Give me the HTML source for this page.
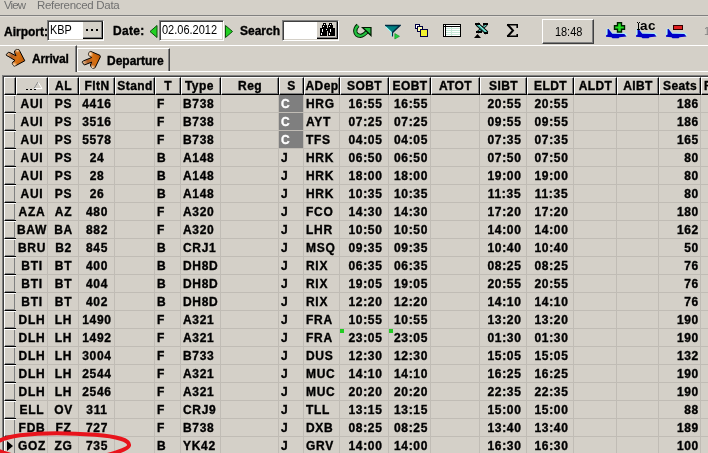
<!DOCTYPE html><html><head><meta charset="utf-8"><style>
*{margin:0;padding:0;box-sizing:border-box}
html,body{width:708px;height:453px;overflow:hidden;background:#d4d0c8}
body{position:relative;font-family:"Liberation Sans",sans-serif;font-size:12px;color:#000}
.ab{position:absolute}
.b{font-weight:bold}
.hc{position:absolute;top:77px;height:18px;background:#d4d0c8;border-top:1px solid #fff;border-left:1px solid #fff;border-right:1px solid #000;border-bottom:1px solid #000;box-shadow:inset -1px -1px #808080;font-weight:bold;line-height:16px;letter-spacing:0.4px;white-space:nowrap;overflow:hidden;text-align:center}
.ic{position:absolute;left:4px;width:12px;height:18px;border-top:1px solid #fff;border-left:1px solid #fff;border-bottom:1px solid #000;box-shadow:inset -1px 0 #d4d0c8, inset -2px -1px #808080}
.dc{position:absolute;height:18px;border-right:1px solid #c0bcb5;border-bottom:1px solid #c0bcb5;font-weight:bold;line-height:19px;letter-spacing:0.7px;white-space:nowrap;overflow:hidden}
.dc,.hc,.lbl{-webkit-text-stroke:0.35px #000}
.l{text-align:left;padding-left:2px}.c{text-align:center;padding-left:1px}.r{text-align:right;padding-right:1px}
.menu{position:absolute;top:-1px;font-size:11.5px;letter-spacing:-0.3px;color:#707070;line-height:13px}
.lbl{position:absolute;font-weight:bold;font-size:12px;line-height:14px}
.sunk{position:absolute;background:#fff;border-top:1px solid #808080;border-left:1px solid #808080;border-bottom:1px solid #fff;border-right:1px solid #fff;box-shadow:inset 1px 1px #404040, inset -1px -1px #d4d0c8}
</style></head><body><div style="position:absolute;left:0;top:0;width:708px;height:453px;overflow:hidden;will-change:transform">
<div class="menu" style="left:4px;letter-spacing:-0.9px">View</div>
<div class="menu" style="left:37px">Referenced Data</div>
<div class="ab" style="left:0;top:15px;width:708px;height:1px;background:#808080"></div>
<div class="ab" style="left:0;top:16px;width:708px;height:1px;background:#e0dcd6"></div>
<div class="lbl" style="left:4px;top:25px">Airport:</div>
<div class="sunk" style="left:47px;top:20px;width:57px;height:21px"></div>
<div class="ab" style="left:50px;top:23px;font-size:12.5px;line-height:14px;transform:scaleX(0.87);transform-origin:0 0">KBP</div>
<div class="ab" style="left:83px;top:22px;width:20px;height:17px;background:#d4d0c8;border-right:1px solid #000;border-bottom:1px solid #000;box-shadow:inset -1px -1px #808080"></div>
<svg class="ab" style="left:86px;top:29px" width="13" height="3"><rect x="0" y="0" width="2" height="2"/><rect x="5" y="0" width="2" height="2"/><rect x="10" y="0" width="2" height="2"/></svg>
<div class="lbl" style="left:113px;top:24px;letter-spacing:0.3px">Date:</div>
<svg class="ab" style="left:149px;top:25px" width="9" height="13"><path d="M8 0.5 L1 6.5 L8 12.5Z" fill="#22d022" stroke="#0c500c" stroke-width="1"/></svg>
<div class="sunk" style="left:159px;top:20px;width:65px;height:21px"></div>
<div class="ab" style="left:162px;top:23px;font-size:12.5px;line-height:14px;transform:scaleX(0.88);transform-origin:0 0">02.06.2012</div>
<svg class="ab" style="left:225px;top:25px" width="9" height="13"><path d="M0.5 0.5 L7.5 6.5 L0.5 12.5Z" fill="#22d022" stroke="#0c500c" stroke-width="1"/></svg>
<div class="lbl" style="left:240px;top:24px">Search</div>
<div class="sunk" style="left:282px;top:20px;width:57px;height:21px"></div>
<div class="ab" style="left:317px;top:22px;width:21px;height:17px;background:#d4d0c8;border-right:1px solid #000;border-bottom:1px solid #000;box-shadow:inset -1px -1px #808080"></div>
<svg class="ab" style="left:320px;top:23px" width="15" height="13" shape-rendering="crispEdges"><rect x="3" y="0" width="1" height="1" fill="#000"/><rect x="4" y="0" width="1" height="1" fill="#000"/><rect x="5" y="0" width="1" height="1" fill="#000"/><rect x="9" y="0" width="1" height="1" fill="#000"/><rect x="10" y="0" width="1" height="1" fill="#000"/><rect x="11" y="0" width="1" height="1" fill="#000"/><rect x="3" y="1" width="1" height="1" fill="#000"/><rect x="4" y="1" width="1" height="1" fill="#fff"/><rect x="5" y="1" width="1" height="1" fill="#000"/><rect x="9" y="1" width="1" height="1" fill="#000"/><rect x="10" y="1" width="1" height="1" fill="#fff"/><rect x="11" y="1" width="1" height="1" fill="#000"/><rect x="2" y="2" width="1" height="1" fill="#000"/><rect x="3" y="2" width="1" height="1" fill="#000"/><rect x="4" y="2" width="1" height="1" fill="#000"/><rect x="5" y="2" width="1" height="1" fill="#000"/><rect x="6" y="2" width="1" height="1" fill="#000"/><rect x="8" y="2" width="1" height="1" fill="#000"/><rect x="9" y="2" width="1" height="1" fill="#000"/><rect x="10" y="2" width="1" height="1" fill="#000"/><rect x="11" y="2" width="1" height="1" fill="#000"/><rect x="12" y="2" width="1" height="1" fill="#000"/><rect x="2" y="3" width="1" height="1" fill="#000"/><rect x="3" y="3" width="1" height="1" fill="#fff"/><rect x="4" y="3" width="1" height="1" fill="#000"/><rect x="5" y="3" width="1" height="1" fill="#000"/><rect x="6" y="3" width="1" height="1" fill="#000"/><rect x="8" y="3" width="1" height="1" fill="#000"/><rect x="9" y="3" width="1" height="1" fill="#fff"/><rect x="10" y="3" width="1" height="1" fill="#000"/><rect x="11" y="3" width="1" height="1" fill="#000"/><rect x="12" y="3" width="1" height="1" fill="#000"/><rect x="2" y="4" width="1" height="1" fill="#000"/><rect x="3" y="4" width="1" height="1" fill="#000"/><rect x="4" y="4" width="1" height="1" fill="#000"/><rect x="5" y="4" width="1" height="1" fill="#000"/><rect x="6" y="4" width="1" height="1" fill="#000"/><rect x="8" y="4" width="1" height="1" fill="#000"/><rect x="9" y="4" width="1" height="1" fill="#000"/><rect x="10" y="4" width="1" height="1" fill="#000"/><rect x="11" y="4" width="1" height="1" fill="#000"/><rect x="12" y="4" width="1" height="1" fill="#000"/><rect x="0" y="5" width="1" height="1" fill="#000"/><rect x="1" y="5" width="1" height="1" fill="#000"/><rect x="2" y="5" width="1" height="1" fill="#000"/><rect x="3" y="5" width="1" height="1" fill="#000"/><rect x="4" y="5" width="1" height="1" fill="#000"/><rect x="5" y="5" width="1" height="1" fill="#000"/><rect x="6" y="5" width="1" height="1" fill="#000"/><rect x="7" y="5" width="1" height="1" fill="#000"/><rect x="8" y="5" width="1" height="1" fill="#000"/><rect x="9" y="5" width="1" height="1" fill="#000"/><rect x="10" y="5" width="1" height="1" fill="#000"/><rect x="11" y="5" width="1" height="1" fill="#000"/><rect x="12" y="5" width="1" height="1" fill="#000"/><rect x="13" y="5" width="1" height="1" fill="#000"/><rect x="14" y="5" width="1" height="1" fill="#000"/><rect x="0" y="6" width="1" height="1" fill="#000"/><rect x="1" y="6" width="1" height="1" fill="#000"/><rect x="2" y="6" width="1" height="1" fill="#fff"/><rect x="3" y="6" width="1" height="1" fill="#000"/><rect x="4" y="6" width="1" height="1" fill="#000"/><rect x="5" y="6" width="1" height="1" fill="#000"/><rect x="6" y="6" width="1" height="1" fill="#fff"/><rect x="7" y="6" width="1" height="1" fill="#000"/><rect x="8" y="6" width="1" height="1" fill="#000"/><rect x="9" y="6" width="1" height="1" fill="#000"/><rect x="10" y="6" width="1" height="1" fill="#fff"/><rect x="11" y="6" width="1" height="1" fill="#000"/><rect x="12" y="6" width="1" height="1" fill="#000"/><rect x="13" y="6" width="1" height="1" fill="#000"/><rect x="14" y="6" width="1" height="1" fill="#000"/><rect x="0" y="7" width="1" height="1" fill="#000"/><rect x="1" y="7" width="1" height="1" fill="#000"/><rect x="2" y="7" width="1" height="1" fill="#fff"/><rect x="3" y="7" width="1" height="1" fill="#000"/><rect x="4" y="7" width="1" height="1" fill="#000"/><rect x="5" y="7" width="1" height="1" fill="#000"/><rect x="6" y="7" width="1" height="1" fill="#000"/><rect x="7" y="7" width="1" height="1" fill="#000"/><rect x="8" y="7" width="1" height="1" fill="#000"/><rect x="9" y="7" width="1" height="1" fill="#000"/><rect x="10" y="7" width="1" height="1" fill="#fff"/><rect x="11" y="7" width="1" height="1" fill="#000"/><rect x="12" y="7" width="1" height="1" fill="#000"/><rect x="13" y="7" width="1" height="1" fill="#000"/><rect x="14" y="7" width="1" height="1" fill="#000"/><rect x="0" y="8" width="1" height="1" fill="#000"/><rect x="1" y="8" width="1" height="1" fill="#000"/><rect x="2" y="8" width="1" height="1" fill="#fff"/><rect x="3" y="8" width="1" height="1" fill="#000"/><rect x="4" y="8" width="1" height="1" fill="#000"/><rect x="5" y="8" width="1" height="1" fill="#000"/><rect x="6" y="8" width="1" height="1" fill="#000"/><rect x="8" y="8" width="1" height="1" fill="#000"/><rect x="9" y="8" width="1" height="1" fill="#000"/><rect x="10" y="8" width="1" height="1" fill="#fff"/><rect x="11" y="8" width="1" height="1" fill="#000"/><rect x="12" y="8" width="1" height="1" fill="#000"/><rect x="13" y="8" width="1" height="1" fill="#000"/><rect x="14" y="8" width="1" height="1" fill="#000"/><rect x="0" y="9" width="1" height="1" fill="#000"/><rect x="1" y="9" width="1" height="1" fill="#000"/><rect x="2" y="9" width="1" height="1" fill="#000"/><rect x="3" y="9" width="1" height="1" fill="#000"/><rect x="4" y="9" width="1" height="1" fill="#000"/><rect x="5" y="9" width="1" height="1" fill="#000"/><rect x="6" y="9" width="1" height="1" fill="#000"/><rect x="8" y="9" width="1" height="1" fill="#000"/><rect x="9" y="9" width="1" height="1" fill="#000"/><rect x="10" y="9" width="1" height="1" fill="#000"/><rect x="11" y="9" width="1" height="1" fill="#000"/><rect x="12" y="9" width="1" height="1" fill="#000"/><rect x="13" y="9" width="1" height="1" fill="#000"/><rect x="14" y="9" width="1" height="1" fill="#000"/><rect x="0" y="10" width="1" height="1" fill="#000"/><rect x="1" y="10" width="1" height="1" fill="#fff"/><rect x="2" y="10" width="1" height="1" fill="#000"/><rect x="3" y="10" width="1" height="1" fill="#000"/><rect x="4" y="10" width="1" height="1" fill="#000"/><rect x="5" y="10" width="1" height="1" fill="#000"/><rect x="6" y="10" width="1" height="1" fill="#000"/><rect x="8" y="10" width="1" height="1" fill="#000"/><rect x="9" y="10" width="1" height="1" fill="#fff"/><rect x="10" y="10" width="1" height="1" fill="#000"/><rect x="11" y="10" width="1" height="1" fill="#000"/><rect x="12" y="10" width="1" height="1" fill="#000"/><rect x="13" y="10" width="1" height="1" fill="#000"/><rect x="14" y="10" width="1" height="1" fill="#000"/><rect x="0" y="11" width="1" height="1" fill="#000"/><rect x="1" y="11" width="1" height="1" fill="#fff"/><rect x="2" y="11" width="1" height="1" fill="#000"/><rect x="3" y="11" width="1" height="1" fill="#000"/><rect x="4" y="11" width="1" height="1" fill="#000"/><rect x="5" y="11" width="1" height="1" fill="#000"/><rect x="6" y="11" width="1" height="1" fill="#000"/><rect x="8" y="11" width="1" height="1" fill="#000"/><rect x="9" y="11" width="1" height="1" fill="#fff"/><rect x="10" y="11" width="1" height="1" fill="#000"/><rect x="11" y="11" width="1" height="1" fill="#000"/><rect x="12" y="11" width="1" height="1" fill="#000"/><rect x="13" y="11" width="1" height="1" fill="#000"/><rect x="14" y="11" width="1" height="1" fill="#000"/><rect x="0" y="12" width="1" height="1" fill="#000"/><rect x="1" y="12" width="1" height="1" fill="#000"/><rect x="2" y="12" width="1" height="1" fill="#000"/><rect x="3" y="12" width="1" height="1" fill="#000"/><rect x="4" y="12" width="1" height="1" fill="#000"/><rect x="5" y="12" width="1" height="1" fill="#000"/><rect x="6" y="12" width="1" height="1" fill="#000"/><rect x="8" y="12" width="1" height="1" fill="#000"/><rect x="9" y="12" width="1" height="1" fill="#000"/><rect x="10" y="12" width="1" height="1" fill="#000"/><rect x="11" y="12" width="1" height="1" fill="#000"/><rect x="12" y="12" width="1" height="1" fill="#000"/><rect x="13" y="12" width="1" height="1" fill="#000"/><rect x="14" y="12" width="1" height="1" fill="#000"/></svg>
<svg class="ab" style="left:352px;top:23px" width="21" height="16"><path d="M6 2.2 Q3 5 3.3 8.5 Q3.8 12.8 8.5 12.8 Q11.5 12.8 16.5 7.2" fill="none" stroke="#002000" stroke-width="4.2" stroke-linejoin="round"/><path d="M6 2.6 Q3 5 3.3 8.5 Q3.8 12.8 8.5 12.8 Q11.5 12.8 16.5 7.2" fill="none" stroke="#22c040" stroke-width="2.3" stroke-linejoin="round"/><path d="M10.5 4.5 L19 4.5 L19 12.5Z" fill="#22c040" stroke="#001800" stroke-width="1.2" stroke-linejoin="miter"/></svg>
<svg class="ab" style="left:384px;top:24px" width="17" height="16"><path d="M1 1.5 H16 L8.5 8.5Z" fill="#008080"/><path d="M1 1.5 H16 L8.5 8.5" fill="none" stroke="#002840" stroke-width="1.5"/><path d="M1.5 2.5 L7.5 8.5 V12" fill="none" stroke="#90ffff" stroke-width="1"/><path d="M8.5 8 V12.5" stroke="#002840" stroke-width="1.2"/><path d="M10.8 9.5 L15.5 12.3 L10.8 15Z" fill="#22d040" stroke="#109020" stroke-width="0.6"/></svg>
<svg class="ab" style="left:414px;top:23px" width="16" height="15" shape-rendering="crispEdges"><rect x="1.5" y="1.5" width="4" height="4" fill="#fff" stroke="#000040"/><rect x="3.5" y="3.5" width="5" height="5" fill="#ffffb0" stroke="#000040"/><rect x="6.5" y="6.5" width="7" height="7" fill="#f0f030" stroke="#000040"/></svg>
<svg class="ab" style="left:443px;top:24px" width="18" height="13" shape-rendering="crispEdges"><rect x="0" y="0" width="18" height="13" fill="#000"/><rect x="1" y="1" width="1" height="1" fill="#fff"/><rect x="3" y="1" width="14" height="1" fill="#fff"/><rect x="1" y="3" width="1" height="9" fill="#fff"/><rect x="3" y="3" width="14" height="9" fill="#fff"/><rect x="3" y="4" width="14" height="1" fill="#c8e8d8"/><rect x="3" y="6" width="14" height="1" fill="#c8e8d8"/><rect x="3" y="8" width="14" height="1" fill="#c8e8d8"/><rect x="3" y="10" width="14" height="1" fill="#c8e8d8"/><rect x="8" y="3" width="1" height="9" fill="#c8e8d8"/></svg>
<svg class="ab" style="left:474px;top:22px" width="16" height="17"><path d="M12.5 2.5 L3.5 10.5" stroke="#000" stroke-width="3"/><path d="M12.5 2.5 L3.5 10.5" stroke="#60d0c0" stroke-width="1.2"/><path d="M3 2 L13 11" stroke="#000" stroke-width="4"/><path d="M3 2 L13 11" stroke="#40b8a8" stroke-width="2.2"/><path d="M3.5 1.8 L12 9.5" stroke="#b0fff0" stroke-width="0.8"/><rect x="1" y="1" width="5" height="2" fill="#000"/><rect x="9" y="1" width="5" height="2" fill="#000"/><rect x="2" y="9" width="6" height="2" fill="#000"/><rect x="10" y="10" width="4" height="2" fill="#000"/><path d="M0 16 L3.5 12 L7 16Z" fill="#000"/></svg>
<svg class="ab" style="left:505px;top:23px" width="14" height="15"><path d="M2 1.8 H12.2 V5 M12.2 11 V13.2 H2" fill="none" stroke="#000" stroke-width="1.6"/><path d="M2.5 1.5 L8 7.5 L2.5 13.5" fill="none" stroke="#000" stroke-width="2"/></svg>
<div class="ab" style="left:542px;top:19px;width:52px;height:25px;background:#d4d0c8;border-top:1px solid #fff;border-left:1px solid #fff;border-right:1px solid #404040;border-bottom:1px solid #404040;box-shadow:inset -1px -1px #808080;text-align:center;line-height:24px;font-size:12.5px"><span style="display:inline-block;transform:scaleX(0.88);margin-left:1px">18:48</span></div>
<svg class="ab" style="left:606px;top:28px" width="23" height="12"><path d="M0.8 1.5 V7 M1.2 0.6 L6 5.2 L18.5 5.4 L21 7.6" fill="none" stroke="#a8f0ff" stroke-width="1.3" stroke-linejoin="round"/><path d="M1.6 1 L2.6 1 L6.3 5.8 L18.3 6.1 L20.5 8.6 L13.5 9.3 L12.5 10.2 L6.5 10.2 L5.5 9.3 L0 8.8 L0 7.6 L1.6 6.6Z" fill="#0000c8"/></svg>
<svg class="ab" style="left:613px;top:21px" width="14" height="13"><path d="M4.5 1.7H8.5V4.7H11.5V8.3H8.5V11H4.5V8.3H1.5V4.7H4.5Z" fill="#22e022" stroke="#002000" stroke-width="1.4"/></svg>
<svg class="ab" style="left:636px;top:28px" width="23" height="12"><path d="M0.8 1.5 V7 M1.2 0.6 L6 5.2 L18.5 5.4 L21 7.6" fill="none" stroke="#a8f0ff" stroke-width="1.3" stroke-linejoin="round"/><path d="M1.6 1 L2.6 1 L6.3 5.8 L18.3 6.1 L20.5 8.6 L13.5 9.3 L12.5 10.2 L6.5 10.2 L5.5 9.3 L0 8.8 L0 7.6 L1.6 6.6Z" fill="#0000c8"/></svg>
<svg class="ab" style="left:636px;top:21px" width="6" height="10" shape-rendering="crispEdges"><rect x="1" y="1" width="1" height="1"/><rect x="3" y="1" width="1" height="1"/><rect x="2" y="2" width="1" height="6"/><rect x="1" y="8" width="3" height="1"/></svg>
<div class="ab" style="left:640px;top:18px;font-weight:bold;font-size:13.5px;line-height:16px;letter-spacing:0.6px">ac</div>
<svg class="ab" style="left:666px;top:28px" width="23" height="12"><path d="M0.8 1.5 V7 M1.2 0.6 L6 5.2 L18.5 5.4 L21 7.6" fill="none" stroke="#a8f0ff" stroke-width="1.3" stroke-linejoin="round"/><path d="M1.6 1 L2.6 1 L6.3 5.8 L18.3 6.1 L20.5 8.6 L13.5 9.3 L12.5 10.2 L6.5 10.2 L5.5 9.3 L0 8.8 L0 7.6 L1.6 6.6Z" fill="#0000c8"/></svg>
<svg class="ab" style="left:672px;top:24px" width="12" height="7" shape-rendering="crispEdges"><rect x="1.5" y="1.5" width="9" height="4" fill="#e02020" stroke="#300000"/></svg>
<div class="ab" style="left:704px;top:25px;color:#808080;font-size:11px;line-height:13px">1</div>
<div class="ab" style="left:0;top:71px;width:708px;height:1px;background:#fff"></div>
<div class="ab" style="left:0;top:45px;width:708px;height:1px;background:#fff"></div>
<div class="ab" style="left:77px;top:48px;width:93px;height:23px;background:#d4d0c8;border-top:1px solid #fff;border-left:1px solid #fff;border-right:1px solid #404040;box-shadow:inset -1px 0 #808080"></div>
<div class="ab" style="left:0;top:45px;width:77px;height:27px;background:#d4d0c8;border-top:1px solid #fff;border-right:1px solid #404040;box-shadow:inset -1px 0 #808080"></div>
<div class="lbl" style="left:32px;top:52px;letter-spacing:-0.2px">Arrival</div>
<div class="lbl" style="left:107px;top:54px">Departure</div>
<svg class="ab" style="left:0;top:46px" width="28" height="24"><defs><linearGradient id="g1" x1="6" y1="8" x2="24" y2="15" gradientUnits="userSpaceOnUse"><stop offset="0" stop-color="#f0d0a8"/><stop offset="0.3" stop-color="#b06028"/><stop offset="0.65" stop-color="#d87010"/><stop offset="1" stop-color="#b85808"/></linearGradient><radialGradient id="h1" cx="14" cy="19" r="3.5" gradientUnits="userSpaceOnUse"><stop offset="0" stop-color="#ffe8c8"/><stop offset="1" stop-color="#ffe8c8" stop-opacity="0"/></radialGradient><radialGradient id="k1" cx="17.5" cy="4" r="3" gradientUnits="userSpaceOnUse"><stop offset="0" stop-color="#ffe0b8"/><stop offset="1" stop-color="#ffe0b8" stop-opacity="0"/></radialGradient></defs><path d="M6.2 8.5 L8.4 6.4 L9.9 6.6 L16.0 9.8 L14.4 6.4 L14.7 4.8 L16.6 3.4 L19.0 3.7 L24.8 14.8 L15.8 19.6 L13.9 20.1 L12.3 17.5 L12.9 15.9 L15.0 14.4 L8.1 10.3 L6.5 9.5Z" fill="url(#g1)" stroke="#000" stroke-width="1" stroke-linejoin="round"/><path d="M6.2 8.5 L8.4 6.4 L9.9 6.6 L16.0 9.8 L14.4 6.4 L14.7 4.8 L16.6 3.4 L19.0 3.7 L24.8 14.8 L15.8 19.6 L13.9 20.1 L12.3 17.5 L12.9 15.9 L15.0 14.4 L8.1 10.3 L6.5 9.5Z" fill="url(#h1)"/><path d="M6.2 8.5 L8.4 6.4 L9.9 6.6 L16.0 9.8 L14.4 6.4 L14.7 4.8 L16.6 3.4 L19.0 3.7 L24.8 14.8 L15.8 19.6 L13.9 20.1 L12.3 17.5 L12.9 15.9 L15.0 14.4 L8.1 10.3 L6.5 9.5Z" fill="url(#k1)"/></svg>
<svg class="ab" style="left:78px;top:48px" width="28" height="24"><defs><linearGradient id="g2" x1="4" y1="15" x2="22" y2="8" gradientUnits="userSpaceOnUse"><stop offset="0" stop-color="#f0d0a8"/><stop offset="0.3" stop-color="#b06028"/><stop offset="0.65" stop-color="#d87010"/><stop offset="1" stop-color="#b85808"/></linearGradient><radialGradient id="h2" cx="12" cy="6" r="3.5" gradientUnits="userSpaceOnUse"><stop offset="0" stop-color="#ffe8c8"/><stop offset="1" stop-color="#ffe8c8" stop-opacity="0"/></radialGradient><radialGradient id="k2" cx="14.5" cy="19.5" r="3" gradientUnits="userSpaceOnUse"><stop offset="0" stop-color="#ffe0b8"/><stop offset="1" stop-color="#ffe0b8" stop-opacity="0"/></radialGradient></defs><path d="M4.4 14.6 L6.4 17.0 L13.7 14.1 L12.4 17.0 L13.2 19.0 L15.1 20.4 L17.1 19.7 L22.4 8.8 L21.9 7.3 L12.7 3.4 L11.0 4.4 L10.5 6.8 L11.7 8.3 L13.7 9.5 L5.4 12.9 L4.4 13.6Z" fill="url(#g2)" stroke="#000" stroke-width="1" stroke-linejoin="round"/><path d="M4.4 14.6 L6.4 17.0 L13.7 14.1 L12.4 17.0 L13.2 19.0 L15.1 20.4 L17.1 19.7 L22.4 8.8 L21.9 7.3 L12.7 3.4 L11.0 4.4 L10.5 6.8 L11.7 8.3 L13.7 9.5 L5.4 12.9 L4.4 13.6Z" fill="url(#h2)"/><path d="M4.4 14.6 L6.4 17.0 L13.7 14.1 L12.4 17.0 L13.2 19.0 L15.1 20.4 L17.1 19.7 L22.4 8.8 L21.9 7.3 L12.7 3.4 L11.0 4.4 L10.5 6.8 L11.7 8.3 L13.7 9.5 L5.4 12.9 L4.4 13.6Z" fill="url(#k2)"/></svg>
<div class="ab" style="left:2px;top:75px;width:706px;height:1px;background:#808080"></div>
<div class="ab" style="left:3px;top:76px;width:705px;height:1px;background:#404040"></div>
<div class="ab" style="left:2px;top:75px;width:1px;height:378px;background:#808080"></div>
<div class="ab" style="left:3px;top:76px;width:1px;height:377px;background:#404040"></div>
<div class="hc" style="left:4px;width:12px"></div>
<div class="hc" style="left:16px;width:32px"><svg style="position:absolute;left:0;top:0" width="31" height="17" shape-rendering="crispEdges"><rect x="9" y="11" width="2" height="1"/><rect x="13" y="11" width="2" height="1"/><rect x="17" y="11" width="2" height="1"/></svg><svg style="position:absolute;left:0;top:0" width="31" height="17"><path d="M17 10.5 L21 4 L25 10.5Z" fill="none" stroke="#fff" stroke-width="1"/><path d="M17 10.5 L21 4" stroke="#808080" stroke-width="1"/></svg></div>
<div class="hc" style="left:48px;width:31px">AL</div>
<div class="hc" style="left:79px;width:36px">FltN</div>
<div class="hc" style="left:115px;width:40px">Stand</div>
<div class="hc" style="left:155px;width:26px">T</div>
<div class="hc" style="left:181px;width:40px;text-align:left;padding-left:3px">Type</div>
<div class="hc" style="left:221px;width:58px">Reg</div>
<div class="hc" style="left:279px;width:25px">S</div>
<div class="hc" style="left:304px;width:36px">ADep</div>
<div class="hc" style="left:340px;width:49px">SOBT</div>
<div class="hc" style="left:389px;width:42px">EOBT</div>
<div class="hc" style="left:431px;width:49px">ATOT</div>
<div class="hc" style="left:480px;width:47px">SIBT</div>
<div class="hc" style="left:527px;width:47px">ELDT</div>
<div class="hc" style="left:574px;width:43px">ALDT</div>
<div class="hc" style="left:617px;width:42px">AIBT</div>
<div class="hc" style="left:659px;width:42px">Seats</div>
<div class="hc" style="left:701px;width:60px;text-align:left;padding-left:2px">F</div>
<div class="ic" style="top:95px"></div>
<div class="dc c" style="left:16px;top:95px;width:32px">AUI</div>
<div class="dc c" style="left:48px;top:95px;width:31px">PS</div>
<div class="dc c" style="left:79px;top:95px;width:36px">4416</div>
<div class="dc c" style="left:115px;top:95px;width:40px"></div>
<div class="dc l" style="left:155px;top:95px;width:26px">F</div>
<div class="dc l" style="left:181px;top:95px;width:40px">B738</div>
<div class="dc c" style="left:221px;top:95px;width:58px"></div>
<div class="dc l" style="left:279px;top:95px;width:25px;background:linear-gradient(#7f7f7f,#7f7f7f) 0 0/24px 17px no-repeat;color:#fff;-webkit-text-stroke:0.35px #fff">C</div>
<div class="dc l" style="left:304px;top:95px;width:36px">HRG</div>
<div class="dc c" style="left:340px;top:95px;width:49px;padding-left:3px">16:55</div>
<div class="dc c" style="left:389px;top:95px;width:42px;padding-left:3px">16:55</div>
<div class="dc c" style="left:431px;top:95px;width:49px"></div>
<div class="dc c" style="left:480px;top:95px;width:47px;padding-left:3px">20:55</div>
<div class="dc c" style="left:527px;top:95px;width:47px;padding-left:3px">20:55</div>
<div class="dc c" style="left:574px;top:95px;width:43px"></div>
<div class="dc c" style="left:617px;top:95px;width:42px"></div>
<div class="dc r" style="left:659px;top:95px;width:42px">186</div>
<div class="dc l" style="left:701px;top:95px;width:60px"></div>
<div class="ic" style="top:113px"></div>
<div class="dc c" style="left:16px;top:113px;width:32px">AUI</div>
<div class="dc c" style="left:48px;top:113px;width:31px">PS</div>
<div class="dc c" style="left:79px;top:113px;width:36px">3516</div>
<div class="dc c" style="left:115px;top:113px;width:40px"></div>
<div class="dc l" style="left:155px;top:113px;width:26px">F</div>
<div class="dc l" style="left:181px;top:113px;width:40px">B738</div>
<div class="dc c" style="left:221px;top:113px;width:58px"></div>
<div class="dc l" style="left:279px;top:113px;width:25px;background:linear-gradient(#7f7f7f,#7f7f7f) 0 0/24px 17px no-repeat;color:#fff;-webkit-text-stroke:0.35px #fff">C</div>
<div class="dc l" style="left:304px;top:113px;width:36px">AYT</div>
<div class="dc c" style="left:340px;top:113px;width:49px;padding-left:3px">07:25</div>
<div class="dc c" style="left:389px;top:113px;width:42px;padding-left:3px">07:25</div>
<div class="dc c" style="left:431px;top:113px;width:49px"></div>
<div class="dc c" style="left:480px;top:113px;width:47px;padding-left:3px">09:55</div>
<div class="dc c" style="left:527px;top:113px;width:47px;padding-left:3px">09:55</div>
<div class="dc c" style="left:574px;top:113px;width:43px"></div>
<div class="dc c" style="left:617px;top:113px;width:42px"></div>
<div class="dc r" style="left:659px;top:113px;width:42px">186</div>
<div class="dc l" style="left:701px;top:113px;width:60px"></div>
<div class="ic" style="top:131px"></div>
<div class="dc c" style="left:16px;top:131px;width:32px">AUI</div>
<div class="dc c" style="left:48px;top:131px;width:31px">PS</div>
<div class="dc c" style="left:79px;top:131px;width:36px">5578</div>
<div class="dc c" style="left:115px;top:131px;width:40px"></div>
<div class="dc l" style="left:155px;top:131px;width:26px">F</div>
<div class="dc l" style="left:181px;top:131px;width:40px">B738</div>
<div class="dc c" style="left:221px;top:131px;width:58px"></div>
<div class="dc l" style="left:279px;top:131px;width:25px;background:linear-gradient(#7f7f7f,#7f7f7f) 0 0/24px 17px no-repeat;color:#fff;-webkit-text-stroke:0.35px #fff">C</div>
<div class="dc l" style="left:304px;top:131px;width:36px">TFS</div>
<div class="dc c" style="left:340px;top:131px;width:49px;padding-left:3px">04:05</div>
<div class="dc c" style="left:389px;top:131px;width:42px;padding-left:3px">04:05</div>
<div class="dc c" style="left:431px;top:131px;width:49px"></div>
<div class="dc c" style="left:480px;top:131px;width:47px;padding-left:3px">07:35</div>
<div class="dc c" style="left:527px;top:131px;width:47px;padding-left:3px">07:35</div>
<div class="dc c" style="left:574px;top:131px;width:43px"></div>
<div class="dc c" style="left:617px;top:131px;width:42px"></div>
<div class="dc r" style="left:659px;top:131px;width:42px">165</div>
<div class="dc l" style="left:701px;top:131px;width:60px"></div>
<div class="ic" style="top:149px"></div>
<div class="dc c" style="left:16px;top:149px;width:32px">AUI</div>
<div class="dc c" style="left:48px;top:149px;width:31px">PS</div>
<div class="dc c" style="left:79px;top:149px;width:36px">24</div>
<div class="dc c" style="left:115px;top:149px;width:40px"></div>
<div class="dc l" style="left:155px;top:149px;width:26px">B</div>
<div class="dc l" style="left:181px;top:149px;width:40px">A148</div>
<div class="dc c" style="left:221px;top:149px;width:58px"></div>
<div class="dc l" style="left:279px;top:149px;width:25px">J</div>
<div class="dc l" style="left:304px;top:149px;width:36px">HRK</div>
<div class="dc c" style="left:340px;top:149px;width:49px;padding-left:3px">06:50</div>
<div class="dc c" style="left:389px;top:149px;width:42px;padding-left:3px">06:50</div>
<div class="dc c" style="left:431px;top:149px;width:49px"></div>
<div class="dc c" style="left:480px;top:149px;width:47px;padding-left:3px">07:50</div>
<div class="dc c" style="left:527px;top:149px;width:47px;padding-left:3px">07:50</div>
<div class="dc c" style="left:574px;top:149px;width:43px"></div>
<div class="dc c" style="left:617px;top:149px;width:42px"></div>
<div class="dc r" style="left:659px;top:149px;width:42px">80</div>
<div class="dc l" style="left:701px;top:149px;width:60px"></div>
<div class="ic" style="top:167px"></div>
<div class="dc c" style="left:16px;top:167px;width:32px">AUI</div>
<div class="dc c" style="left:48px;top:167px;width:31px">PS</div>
<div class="dc c" style="left:79px;top:167px;width:36px">28</div>
<div class="dc c" style="left:115px;top:167px;width:40px"></div>
<div class="dc l" style="left:155px;top:167px;width:26px">B</div>
<div class="dc l" style="left:181px;top:167px;width:40px">A148</div>
<div class="dc c" style="left:221px;top:167px;width:58px"></div>
<div class="dc l" style="left:279px;top:167px;width:25px">J</div>
<div class="dc l" style="left:304px;top:167px;width:36px">HRK</div>
<div class="dc c" style="left:340px;top:167px;width:49px;padding-left:3px">18:00</div>
<div class="dc c" style="left:389px;top:167px;width:42px;padding-left:3px">18:00</div>
<div class="dc c" style="left:431px;top:167px;width:49px"></div>
<div class="dc c" style="left:480px;top:167px;width:47px;padding-left:3px">19:00</div>
<div class="dc c" style="left:527px;top:167px;width:47px;padding-left:3px">19:00</div>
<div class="dc c" style="left:574px;top:167px;width:43px"></div>
<div class="dc c" style="left:617px;top:167px;width:42px"></div>
<div class="dc r" style="left:659px;top:167px;width:42px">80</div>
<div class="dc l" style="left:701px;top:167px;width:60px"></div>
<div class="ic" style="top:185px"></div>
<div class="dc c" style="left:16px;top:185px;width:32px">AUI</div>
<div class="dc c" style="left:48px;top:185px;width:31px">PS</div>
<div class="dc c" style="left:79px;top:185px;width:36px">26</div>
<div class="dc c" style="left:115px;top:185px;width:40px"></div>
<div class="dc l" style="left:155px;top:185px;width:26px">B</div>
<div class="dc l" style="left:181px;top:185px;width:40px">A148</div>
<div class="dc c" style="left:221px;top:185px;width:58px"></div>
<div class="dc l" style="left:279px;top:185px;width:25px">J</div>
<div class="dc l" style="left:304px;top:185px;width:36px">HRK</div>
<div class="dc c" style="left:340px;top:185px;width:49px;padding-left:3px">10:35</div>
<div class="dc c" style="left:389px;top:185px;width:42px;padding-left:3px">10:35</div>
<div class="dc c" style="left:431px;top:185px;width:49px"></div>
<div class="dc c" style="left:480px;top:185px;width:47px;padding-left:3px">11:35</div>
<div class="dc c" style="left:527px;top:185px;width:47px;padding-left:3px">11:35</div>
<div class="dc c" style="left:574px;top:185px;width:43px"></div>
<div class="dc c" style="left:617px;top:185px;width:42px"></div>
<div class="dc r" style="left:659px;top:185px;width:42px">80</div>
<div class="dc l" style="left:701px;top:185px;width:60px"></div>
<div class="ic" style="top:203px"></div>
<div class="dc c" style="left:16px;top:203px;width:32px">AZA</div>
<div class="dc c" style="left:48px;top:203px;width:31px">AZ</div>
<div class="dc c" style="left:79px;top:203px;width:36px">480</div>
<div class="dc c" style="left:115px;top:203px;width:40px"></div>
<div class="dc l" style="left:155px;top:203px;width:26px">F</div>
<div class="dc l" style="left:181px;top:203px;width:40px">A320</div>
<div class="dc c" style="left:221px;top:203px;width:58px"></div>
<div class="dc l" style="left:279px;top:203px;width:25px">J</div>
<div class="dc l" style="left:304px;top:203px;width:36px">FCO</div>
<div class="dc c" style="left:340px;top:203px;width:49px;padding-left:3px">14:30</div>
<div class="dc c" style="left:389px;top:203px;width:42px;padding-left:3px">14:30</div>
<div class="dc c" style="left:431px;top:203px;width:49px"></div>
<div class="dc c" style="left:480px;top:203px;width:47px;padding-left:3px">17:20</div>
<div class="dc c" style="left:527px;top:203px;width:47px;padding-left:3px">17:20</div>
<div class="dc c" style="left:574px;top:203px;width:43px"></div>
<div class="dc c" style="left:617px;top:203px;width:42px"></div>
<div class="dc r" style="left:659px;top:203px;width:42px">180</div>
<div class="dc l" style="left:701px;top:203px;width:60px"></div>
<div class="ic" style="top:221px"></div>
<div class="dc c" style="left:16px;top:221px;width:32px">BAW</div>
<div class="dc c" style="left:48px;top:221px;width:31px">BA</div>
<div class="dc c" style="left:79px;top:221px;width:36px">882</div>
<div class="dc c" style="left:115px;top:221px;width:40px"></div>
<div class="dc l" style="left:155px;top:221px;width:26px">F</div>
<div class="dc l" style="left:181px;top:221px;width:40px">A320</div>
<div class="dc c" style="left:221px;top:221px;width:58px"></div>
<div class="dc l" style="left:279px;top:221px;width:25px">J</div>
<div class="dc l" style="left:304px;top:221px;width:36px">LHR</div>
<div class="dc c" style="left:340px;top:221px;width:49px;padding-left:3px">10:50</div>
<div class="dc c" style="left:389px;top:221px;width:42px;padding-left:3px">10:50</div>
<div class="dc c" style="left:431px;top:221px;width:49px"></div>
<div class="dc c" style="left:480px;top:221px;width:47px;padding-left:3px">14:00</div>
<div class="dc c" style="left:527px;top:221px;width:47px;padding-left:3px">14:00</div>
<div class="dc c" style="left:574px;top:221px;width:43px"></div>
<div class="dc c" style="left:617px;top:221px;width:42px"></div>
<div class="dc r" style="left:659px;top:221px;width:42px">162</div>
<div class="dc l" style="left:701px;top:221px;width:60px"></div>
<div class="ic" style="top:239px"></div>
<div class="dc c" style="left:16px;top:239px;width:32px">BRU</div>
<div class="dc c" style="left:48px;top:239px;width:31px">B2</div>
<div class="dc c" style="left:79px;top:239px;width:36px">845</div>
<div class="dc c" style="left:115px;top:239px;width:40px"></div>
<div class="dc l" style="left:155px;top:239px;width:26px">B</div>
<div class="dc l" style="left:181px;top:239px;width:40px">CRJ1</div>
<div class="dc c" style="left:221px;top:239px;width:58px"></div>
<div class="dc l" style="left:279px;top:239px;width:25px">J</div>
<div class="dc l" style="left:304px;top:239px;width:36px">MSQ</div>
<div class="dc c" style="left:340px;top:239px;width:49px;padding-left:3px">09:35</div>
<div class="dc c" style="left:389px;top:239px;width:42px;padding-left:3px">09:35</div>
<div class="dc c" style="left:431px;top:239px;width:49px"></div>
<div class="dc c" style="left:480px;top:239px;width:47px;padding-left:3px">10:40</div>
<div class="dc c" style="left:527px;top:239px;width:47px;padding-left:3px">10:40</div>
<div class="dc c" style="left:574px;top:239px;width:43px"></div>
<div class="dc c" style="left:617px;top:239px;width:42px"></div>
<div class="dc r" style="left:659px;top:239px;width:42px">50</div>
<div class="dc l" style="left:701px;top:239px;width:60px"></div>
<div class="ic" style="top:257px"></div>
<div class="dc c" style="left:16px;top:257px;width:32px">BTI</div>
<div class="dc c" style="left:48px;top:257px;width:31px">BT</div>
<div class="dc c" style="left:79px;top:257px;width:36px">400</div>
<div class="dc c" style="left:115px;top:257px;width:40px"></div>
<div class="dc l" style="left:155px;top:257px;width:26px">B</div>
<div class="dc l" style="left:181px;top:257px;width:40px">DH8D</div>
<div class="dc c" style="left:221px;top:257px;width:58px"></div>
<div class="dc l" style="left:279px;top:257px;width:25px">J</div>
<div class="dc l" style="left:304px;top:257px;width:36px">RIX</div>
<div class="dc c" style="left:340px;top:257px;width:49px;padding-left:3px">06:35</div>
<div class="dc c" style="left:389px;top:257px;width:42px;padding-left:3px">06:35</div>
<div class="dc c" style="left:431px;top:257px;width:49px"></div>
<div class="dc c" style="left:480px;top:257px;width:47px;padding-left:3px">08:25</div>
<div class="dc c" style="left:527px;top:257px;width:47px;padding-left:3px">08:25</div>
<div class="dc c" style="left:574px;top:257px;width:43px"></div>
<div class="dc c" style="left:617px;top:257px;width:42px"></div>
<div class="dc r" style="left:659px;top:257px;width:42px">76</div>
<div class="dc l" style="left:701px;top:257px;width:60px"></div>
<div class="ic" style="top:275px"></div>
<div class="dc c" style="left:16px;top:275px;width:32px">BTI</div>
<div class="dc c" style="left:48px;top:275px;width:31px">BT</div>
<div class="dc c" style="left:79px;top:275px;width:36px">404</div>
<div class="dc c" style="left:115px;top:275px;width:40px"></div>
<div class="dc l" style="left:155px;top:275px;width:26px">B</div>
<div class="dc l" style="left:181px;top:275px;width:40px">DH8D</div>
<div class="dc c" style="left:221px;top:275px;width:58px"></div>
<div class="dc l" style="left:279px;top:275px;width:25px">J</div>
<div class="dc l" style="left:304px;top:275px;width:36px">RIX</div>
<div class="dc c" style="left:340px;top:275px;width:49px;padding-left:3px">19:05</div>
<div class="dc c" style="left:389px;top:275px;width:42px;padding-left:3px">19:05</div>
<div class="dc c" style="left:431px;top:275px;width:49px"></div>
<div class="dc c" style="left:480px;top:275px;width:47px;padding-left:3px">20:55</div>
<div class="dc c" style="left:527px;top:275px;width:47px;padding-left:3px">20:55</div>
<div class="dc c" style="left:574px;top:275px;width:43px"></div>
<div class="dc c" style="left:617px;top:275px;width:42px"></div>
<div class="dc r" style="left:659px;top:275px;width:42px">76</div>
<div class="dc l" style="left:701px;top:275px;width:60px"></div>
<div class="ic" style="top:293px"></div>
<div class="dc c" style="left:16px;top:293px;width:32px">BTI</div>
<div class="dc c" style="left:48px;top:293px;width:31px">BT</div>
<div class="dc c" style="left:79px;top:293px;width:36px">402</div>
<div class="dc c" style="left:115px;top:293px;width:40px"></div>
<div class="dc l" style="left:155px;top:293px;width:26px">B</div>
<div class="dc l" style="left:181px;top:293px;width:40px">DH8D</div>
<div class="dc c" style="left:221px;top:293px;width:58px"></div>
<div class="dc l" style="left:279px;top:293px;width:25px">J</div>
<div class="dc l" style="left:304px;top:293px;width:36px">RIX</div>
<div class="dc c" style="left:340px;top:293px;width:49px;padding-left:3px">12:20</div>
<div class="dc c" style="left:389px;top:293px;width:42px;padding-left:3px">12:20</div>
<div class="dc c" style="left:431px;top:293px;width:49px"></div>
<div class="dc c" style="left:480px;top:293px;width:47px;padding-left:3px">14:10</div>
<div class="dc c" style="left:527px;top:293px;width:47px;padding-left:3px">14:10</div>
<div class="dc c" style="left:574px;top:293px;width:43px"></div>
<div class="dc c" style="left:617px;top:293px;width:42px"></div>
<div class="dc r" style="left:659px;top:293px;width:42px">76</div>
<div class="dc l" style="left:701px;top:293px;width:60px"></div>
<div class="ic" style="top:311px"></div>
<div class="dc c" style="left:16px;top:311px;width:32px">DLH</div>
<div class="dc c" style="left:48px;top:311px;width:31px">LH</div>
<div class="dc c" style="left:79px;top:311px;width:36px">1490</div>
<div class="dc c" style="left:115px;top:311px;width:40px"></div>
<div class="dc l" style="left:155px;top:311px;width:26px">F</div>
<div class="dc l" style="left:181px;top:311px;width:40px">A321</div>
<div class="dc c" style="left:221px;top:311px;width:58px"></div>
<div class="dc l" style="left:279px;top:311px;width:25px">J</div>
<div class="dc l" style="left:304px;top:311px;width:36px">FRA</div>
<div class="dc c" style="left:340px;top:311px;width:49px;padding-left:3px">10:55</div>
<div class="dc c" style="left:389px;top:311px;width:42px;padding-left:3px">10:55</div>
<div class="dc c" style="left:431px;top:311px;width:49px"></div>
<div class="dc c" style="left:480px;top:311px;width:47px;padding-left:3px">13:20</div>
<div class="dc c" style="left:527px;top:311px;width:47px;padding-left:3px">13:20</div>
<div class="dc c" style="left:574px;top:311px;width:43px"></div>
<div class="dc c" style="left:617px;top:311px;width:42px"></div>
<div class="dc r" style="left:659px;top:311px;width:42px">190</div>
<div class="dc l" style="left:701px;top:311px;width:60px"></div>
<div class="ic" style="top:329px"></div>
<div class="dc c" style="left:16px;top:329px;width:32px">DLH</div>
<div class="dc c" style="left:48px;top:329px;width:31px">LH</div>
<div class="dc c" style="left:79px;top:329px;width:36px">1492</div>
<div class="dc c" style="left:115px;top:329px;width:40px"></div>
<div class="dc l" style="left:155px;top:329px;width:26px">F</div>
<div class="dc l" style="left:181px;top:329px;width:40px">A321</div>
<div class="dc c" style="left:221px;top:329px;width:58px"></div>
<div class="dc l" style="left:279px;top:329px;width:25px">J</div>
<div class="dc l" style="left:304px;top:329px;width:36px">FRA</div>
<div class="dc c" style="left:340px;top:329px;width:49px;padding-left:3px">23:05</div>
<div class="dc c" style="left:389px;top:329px;width:42px;padding-left:3px">23:05</div>
<div class="dc c" style="left:431px;top:329px;width:49px"></div>
<div class="dc c" style="left:480px;top:329px;width:47px;padding-left:3px">01:30</div>
<div class="dc c" style="left:527px;top:329px;width:47px;padding-left:3px">01:30</div>
<div class="dc c" style="left:574px;top:329px;width:43px"></div>
<div class="dc c" style="left:617px;top:329px;width:42px"></div>
<div class="dc r" style="left:659px;top:329px;width:42px">190</div>
<div class="dc l" style="left:701px;top:329px;width:60px"></div>
<div class="ic" style="top:347px"></div>
<div class="dc c" style="left:16px;top:347px;width:32px">DLH</div>
<div class="dc c" style="left:48px;top:347px;width:31px">LH</div>
<div class="dc c" style="left:79px;top:347px;width:36px">3004</div>
<div class="dc c" style="left:115px;top:347px;width:40px"></div>
<div class="dc l" style="left:155px;top:347px;width:26px">F</div>
<div class="dc l" style="left:181px;top:347px;width:40px">B733</div>
<div class="dc c" style="left:221px;top:347px;width:58px"></div>
<div class="dc l" style="left:279px;top:347px;width:25px">J</div>
<div class="dc l" style="left:304px;top:347px;width:36px">DUS</div>
<div class="dc c" style="left:340px;top:347px;width:49px;padding-left:3px">12:30</div>
<div class="dc c" style="left:389px;top:347px;width:42px;padding-left:3px">12:30</div>
<div class="dc c" style="left:431px;top:347px;width:49px"></div>
<div class="dc c" style="left:480px;top:347px;width:47px;padding-left:3px">15:05</div>
<div class="dc c" style="left:527px;top:347px;width:47px;padding-left:3px">15:05</div>
<div class="dc c" style="left:574px;top:347px;width:43px"></div>
<div class="dc c" style="left:617px;top:347px;width:42px"></div>
<div class="dc r" style="left:659px;top:347px;width:42px">132</div>
<div class="dc l" style="left:701px;top:347px;width:60px"></div>
<div class="ic" style="top:365px"></div>
<div class="dc c" style="left:16px;top:365px;width:32px">DLH</div>
<div class="dc c" style="left:48px;top:365px;width:31px">LH</div>
<div class="dc c" style="left:79px;top:365px;width:36px">2544</div>
<div class="dc c" style="left:115px;top:365px;width:40px"></div>
<div class="dc l" style="left:155px;top:365px;width:26px">F</div>
<div class="dc l" style="left:181px;top:365px;width:40px">A321</div>
<div class="dc c" style="left:221px;top:365px;width:58px"></div>
<div class="dc l" style="left:279px;top:365px;width:25px">J</div>
<div class="dc l" style="left:304px;top:365px;width:36px">MUC</div>
<div class="dc c" style="left:340px;top:365px;width:49px;padding-left:3px">14:10</div>
<div class="dc c" style="left:389px;top:365px;width:42px;padding-left:3px">14:10</div>
<div class="dc c" style="left:431px;top:365px;width:49px"></div>
<div class="dc c" style="left:480px;top:365px;width:47px;padding-left:3px">16:25</div>
<div class="dc c" style="left:527px;top:365px;width:47px;padding-left:3px">16:25</div>
<div class="dc c" style="left:574px;top:365px;width:43px"></div>
<div class="dc c" style="left:617px;top:365px;width:42px"></div>
<div class="dc r" style="left:659px;top:365px;width:42px">190</div>
<div class="dc l" style="left:701px;top:365px;width:60px"></div>
<div class="ic" style="top:383px"></div>
<div class="dc c" style="left:16px;top:383px;width:32px">DLH</div>
<div class="dc c" style="left:48px;top:383px;width:31px">LH</div>
<div class="dc c" style="left:79px;top:383px;width:36px">2546</div>
<div class="dc c" style="left:115px;top:383px;width:40px"></div>
<div class="dc l" style="left:155px;top:383px;width:26px">F</div>
<div class="dc l" style="left:181px;top:383px;width:40px">A321</div>
<div class="dc c" style="left:221px;top:383px;width:58px"></div>
<div class="dc l" style="left:279px;top:383px;width:25px">J</div>
<div class="dc l" style="left:304px;top:383px;width:36px">MUC</div>
<div class="dc c" style="left:340px;top:383px;width:49px;padding-left:3px">20:20</div>
<div class="dc c" style="left:389px;top:383px;width:42px;padding-left:3px">20:20</div>
<div class="dc c" style="left:431px;top:383px;width:49px"></div>
<div class="dc c" style="left:480px;top:383px;width:47px;padding-left:3px">22:35</div>
<div class="dc c" style="left:527px;top:383px;width:47px;padding-left:3px">22:35</div>
<div class="dc c" style="left:574px;top:383px;width:43px"></div>
<div class="dc c" style="left:617px;top:383px;width:42px"></div>
<div class="dc r" style="left:659px;top:383px;width:42px">190</div>
<div class="dc l" style="left:701px;top:383px;width:60px"></div>
<div class="ic" style="top:401px"></div>
<div class="dc c" style="left:16px;top:401px;width:32px">ELL</div>
<div class="dc c" style="left:48px;top:401px;width:31px">OV</div>
<div class="dc c" style="left:79px;top:401px;width:36px">311</div>
<div class="dc c" style="left:115px;top:401px;width:40px"></div>
<div class="dc l" style="left:155px;top:401px;width:26px">F</div>
<div class="dc l" style="left:181px;top:401px;width:40px">CRJ9</div>
<div class="dc c" style="left:221px;top:401px;width:58px"></div>
<div class="dc l" style="left:279px;top:401px;width:25px">J</div>
<div class="dc l" style="left:304px;top:401px;width:36px">TLL</div>
<div class="dc c" style="left:340px;top:401px;width:49px;padding-left:3px">13:15</div>
<div class="dc c" style="left:389px;top:401px;width:42px;padding-left:3px">13:15</div>
<div class="dc c" style="left:431px;top:401px;width:49px"></div>
<div class="dc c" style="left:480px;top:401px;width:47px;padding-left:3px">15:00</div>
<div class="dc c" style="left:527px;top:401px;width:47px;padding-left:3px">15:00</div>
<div class="dc c" style="left:574px;top:401px;width:43px"></div>
<div class="dc c" style="left:617px;top:401px;width:42px"></div>
<div class="dc r" style="left:659px;top:401px;width:42px">88</div>
<div class="dc l" style="left:701px;top:401px;width:60px"></div>
<div class="ic" style="top:419px"></div>
<div class="dc c" style="left:16px;top:419px;width:32px">FDB</div>
<div class="dc c" style="left:48px;top:419px;width:31px">FZ</div>
<div class="dc c" style="left:79px;top:419px;width:36px">727</div>
<div class="dc c" style="left:115px;top:419px;width:40px"></div>
<div class="dc l" style="left:155px;top:419px;width:26px">F</div>
<div class="dc l" style="left:181px;top:419px;width:40px">B738</div>
<div class="dc c" style="left:221px;top:419px;width:58px"></div>
<div class="dc l" style="left:279px;top:419px;width:25px">J</div>
<div class="dc l" style="left:304px;top:419px;width:36px">DXB</div>
<div class="dc c" style="left:340px;top:419px;width:49px;padding-left:3px">08:25</div>
<div class="dc c" style="left:389px;top:419px;width:42px;padding-left:3px">08:25</div>
<div class="dc c" style="left:431px;top:419px;width:49px"></div>
<div class="dc c" style="left:480px;top:419px;width:47px;padding-left:3px">13:40</div>
<div class="dc c" style="left:527px;top:419px;width:47px;padding-left:3px">13:40</div>
<div class="dc c" style="left:574px;top:419px;width:43px"></div>
<div class="dc c" style="left:617px;top:419px;width:42px"></div>
<div class="dc r" style="left:659px;top:419px;width:42px">189</div>
<div class="dc l" style="left:701px;top:419px;width:60px"></div>
<div class="ic" style="top:437px"></div>
<div class="dc c" style="left:16px;top:437px;width:32px">GOZ</div>
<div class="dc c" style="left:48px;top:437px;width:31px">ZG</div>
<div class="dc c" style="left:79px;top:437px;width:36px">735</div>
<div class="dc c" style="left:115px;top:437px;width:40px"></div>
<div class="dc l" style="left:155px;top:437px;width:26px">B</div>
<div class="dc l" style="left:181px;top:437px;width:40px">YK42</div>
<div class="dc c" style="left:221px;top:437px;width:58px"></div>
<div class="dc l" style="left:279px;top:437px;width:25px">J</div>
<div class="dc l" style="left:304px;top:437px;width:36px">GRV</div>
<div class="dc c" style="left:340px;top:437px;width:49px;padding-left:3px">14:00</div>
<div class="dc c" style="left:389px;top:437px;width:42px;padding-left:3px">14:00</div>
<div class="dc c" style="left:431px;top:437px;width:49px"></div>
<div class="dc c" style="left:480px;top:437px;width:47px;padding-left:3px">16:30</div>
<div class="dc c" style="left:527px;top:437px;width:47px;padding-left:3px">16:30</div>
<div class="dc c" style="left:574px;top:437px;width:43px"></div>
<div class="dc c" style="left:617px;top:437px;width:42px"></div>
<div class="dc r" style="left:659px;top:437px;width:42px">100</div>
<div class="dc l" style="left:701px;top:437px;width:60px"></div>
<svg class="ab" style="left:6px;top:441px" width="8" height="11"><path d="M1 0 L7 5 L1 10Z" fill="#000"/></svg>
<div class="ab" style="left:340px;top:329px;width:4px;height:4px;background:#22cc22"></div>
<div class="ab" style="left:389px;top:329px;width:4px;height:4px;background:#22cc22"></div>
<svg class="ab" style="left:0;top:0" width="708" height="453"><path d="M100 457 C115 453 128 449.5 129 445.5 C130 440 117 436.5 95 434.8 C70 432.8 40 432.8 20 435.2 C2 437.8 -8 443 -6 447 C-4 451 5 453.5 15 456" fill="none" stroke="#e8141c" stroke-width="4"/></svg>
</div></body></html>
